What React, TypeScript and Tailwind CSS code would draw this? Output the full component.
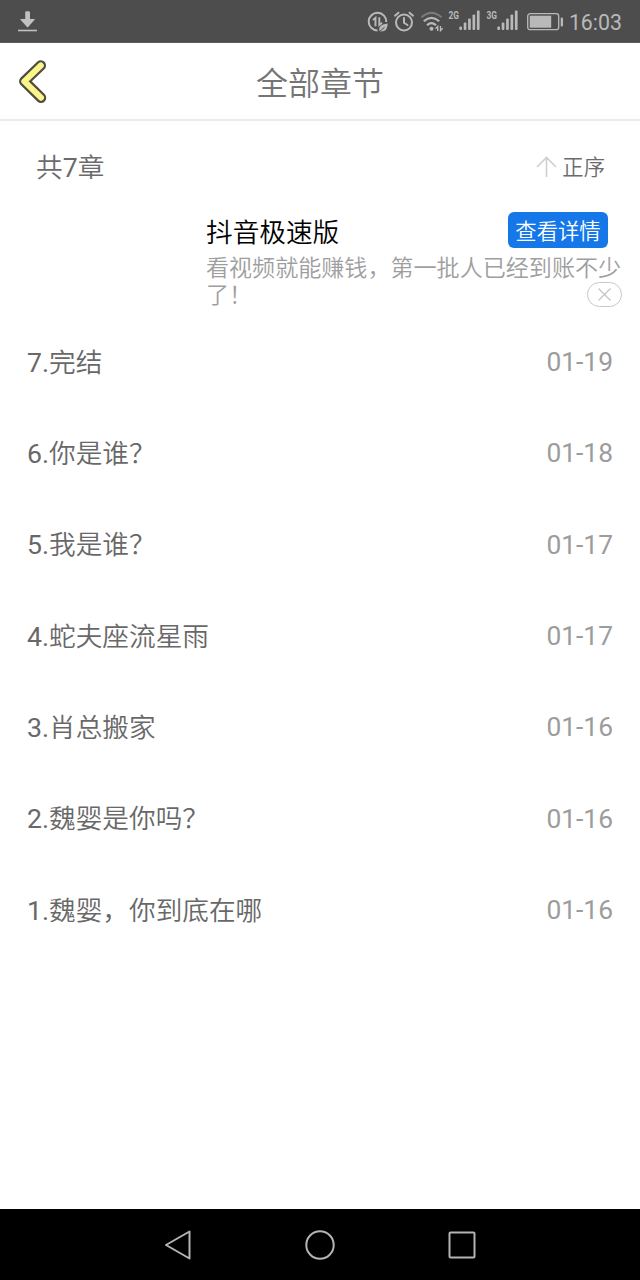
import React from 'react';

interface Chapter {
  id: number;
  title: string;
  date: string;
}

const CHAPTERS: Chapter[] = [
  { id: 7, title: '完结', date: '01-19' },
  { id: 6, title: '你是谁？', date: '01-18' },
  { id: 5, title: '我是谁？', date: '01-17' },
  { id: 4, title: '蛇夫座流星雨', date: '01-17' },
  { id: 3, title: '肖总搬家', date: '01-16' },
  { id: 2, title: '魏婴是你吗？', date: '01-16' },
  { id: 1, title: '魏婴，你到底在哪', date: '01-16' },
];

const Signal: React.FC<{ label: string }> = ({ label }) => (
  <svg width="33" height="24" viewBox="0 0 33 24" fill="#b9b9b9">
    <text x="0.5" y="8.500" fontSize="11" fontWeight="700" fontFamily="Roboto, sans-serif" textLength="10.5" lengthAdjust="spacingAndGlyphs">
      {label}
    </text>
    <rect x="11.3" y="16.500" width="2.7" height="3.5" rx="1" />
    <rect x="15.7" y="12.500" width="2.7" height="7.5" rx="1" />
    <rect x="20.1" y="8.500" width="2.7" height="11.5" rx="1" />
    <rect x="24.5" y="4.500" width="2.7" height="15.5" rx="1" />
    <rect x="28.9" y="0.500" width="2.7" height="19.5" rx="1" />
  </svg>
);

const StatusBar = () => (
  <div className="flex h-[43px] items-center border-b border-[#5c5c5c] bg-[#4d4d4d] pt-[2px] pr-[18px] pl-[17px]">
    <svg width="21" height="24" viewBox="0 0 21 24" fill="#c0c0c0">
      <path d="M9.400 1.200h2.400q1.200 0 1.200 1.200V9h4.300q.9 0 .3.700L11.200 17q-.6.500-1.200 0L3.500 9.700Q3 9 3.800 9H8.200V2.400Q8.200 1.200 9.400 1.200z" />
      <rect x="1" y="19.700" width="19" height="1.600" />
    </svg>

    {/* data saver */}
    <svg className="ml-auto" width="22" height="24" viewBox="0 0 22 24" fill="none" stroke="#b9b9b9" strokeWidth="2">
      <path d="M10.500 20.400A8.800 8.800 0 1 1 19.300 12" />
      <path d="M6 10 8.500 7.900V16.200M12.300 7.300V15l2.700-2.300" strokeWidth="1.900" />
      <path d="M12.200 20.500q-.5-6.500 8.500-7Q20.500 22 13.500 21.500z" fill="#b9b9b9" stroke="none" />
      <path d="m11.800 22.300 5.700-5" stroke="#4d4d4d" strokeWidth="1" />
    </svg>

    {/* alarm */}
    <svg className="ml-[4px]" width="22" height="24" viewBox="0 0 22 24" fill="none" stroke="#b9b9b9" strokeWidth="2" strokeLinecap="round">
      <circle cx="11" cy="12.500" r="8" />
      <path d="M11 8v4.800l3.500 2.200M2 5.700l3.500-3M20 5.700l-3.500-3" />
    </svg>

    {/* wifi */}
    <svg className="ml-[5px]" width="24" height="24" viewBox="0 0 24 24" fill="none" stroke="#b9b9b9" strokeWidth="2">
      <path d="M1.500 7.300Q11.500-1.500 21.500 7.300" stroke="#7b7b7b" />
      <path d="M3.800 11.200q7.700-6.800 15.400 0M7 15.200q4.500-4 9 0" strokeWidth="2.200" />
      <circle cx="11.500" cy="18.700" r="2" fill="#b9b9b9" stroke="none" />
      <path d="m15.500 18.700 2.200-2.200V21M20.500 16v4.500l2.200-2.200" strokeWidth="1.400" />
    </svg>

    <div className="flex gap-[5px] pl-[4px]">
      <Signal label="2G" />
      <Signal label="3G" />
    </div>

    {/* battery */}
    <svg className="ml-[7px]" width="38" height="24" viewBox="0 0 38 24" fill="none">
      <rect x="1.700" y="3.700" width="31" height="16" rx="2.500" stroke="#b9b9b9" strokeWidth="1.300" />
      <rect x="3.700" y="5.700" width="21.500" height="12" fill="#b9b9b9" />
      <rect x="34.700" y="7.500" width="2.300" height="9" rx="1" fill="#b9b9b9" />
    </svg>
    <span className="ml-[5px] pt-px text-[21.330px] leading-6 text-[#b9b9b9]">16:03</span>
  </div>
);

const Header = () => (
  <div className="relative flex h-[78px] items-center justify-center border-b-2 border-[#ebebeb] pt-[5px]">
    <button className="absolute top-[15px] left-[17px]">
      <svg width="32" height="48" viewBox="0 0 32 48" fill="none" strokeLinecap="round" strokeLinejoin="round">
        <path d="M23.800 7.500 7.300 23.300 24 39.700" stroke="#4d4d40" strokeWidth="10.500" />
        <path d="M23.800 7.500 7.300 23.300 24 39.700" stroke="#fbf58c" strokeWidth="6" />
      </svg>
    </button>
    <h1 className="text-[32px] leading-10 font-[350] text-[#757575]">全部章节</h1>
  </div>
);

const AdBanner = () => (
  <div className="relative h-[112px] pt-[7px] pl-[206px]">
    <div className="flex h-9 items-center justify-between pr-8">
      <span className="mt-1.5 text-[26.670px] leading-9 font-[350] text-black">抖音极速版</span>
      <button className="h-9 w-[100px] rounded-md bg-[#1577e8] pt-[3px] text-[21.330px] leading-[33px] font-[350] text-white">查看详情</button>
    </div>
    <p className="mt-[7px] text-[23.070px] leading-[27px] font-[350] text-[#9e9e9e]">看视频就能赚钱，第一批人已经到账不少了！</p>
    <button className="absolute top-[77px] right-[18px] flex h-[25px] w-[35px] items-center justify-center rounded-full border border-[#c8c8c8] bg-white">
      <svg width="13" height="13" viewBox="0 0 13 13" stroke="#c4c4c4" strokeWidth="1.200">
        <path d="m.5.5 12 12M12.500.5l-12 12" />
      </svg>
    </button>
  </div>
);

const App = () => {
  return (
    <div className="flex h-[1280px] w-[640px] flex-col overflow-hidden bg-white font-['Roboto','Noto_Sans_CJK_SC',sans-serif]">
      <StatusBar />
      <Header />

      <div className="flex h-[84px] items-center justify-between pt-[9px] pr-[35px] pl-9 text-[#6b6b6b]">
        <span className="text-[26.670px] font-[350]">
          共<span className="font-normal">{CHAPTERS.length}</span>章
        </span>
        <div className="flex items-center gap-[5px] text-[21.330px] font-[350]">
          <svg width="21" height="22" viewBox="0 0 21 22" fill="none" stroke="#cfcfcf" strokeWidth="1.600">
            <path d="M10.500 21V1.500M1 11l9.500-9.500L20 11" />
          </svg>
          <span className="pt-px">正序</span>
        </div>
      </div>

      <AdBanner />

      <ul className="flex-1">
        {CHAPTERS.map((chapter) => (
          <li key={chapter.id} className="flex h-[91.330px] items-center justify-between px-[27px] text-[26.670px]">
            <span className="text-[#686868]">
              {chapter.id}.<span className="font-[350]">{chapter.title}</span>
            </span>
            <span className="text-[26.400px] text-[#9c9c9c]">{chapter.date}</span>
          </li>
        ))}
      </ul>

      <div className="flex h-[71px] items-center justify-center gap-[112px] bg-black">
        <svg width="30" height="32" viewBox="0 0 30 32" fill="none" stroke="#b4b4b4" strokeWidth="2" strokeLinejoin="round">
          <path d="M26.500 2.500v27L3 16z" />
        </svg>
        <svg width="30" height="30" viewBox="0 0 30 30" fill="none" stroke="#b4b4b4" strokeWidth="2">
          <circle cx="15" cy="15" r="13.700" />
        </svg>
        <svg width="30" height="30" viewBox="0 0 30 30" fill="none" stroke="#b4b4b4" strokeWidth="2">
          <rect x="2.500" y="2.500" width="25" height="25" rx="1" />
        </svg>
      </div>
    </div>
  );
};

export default App;
